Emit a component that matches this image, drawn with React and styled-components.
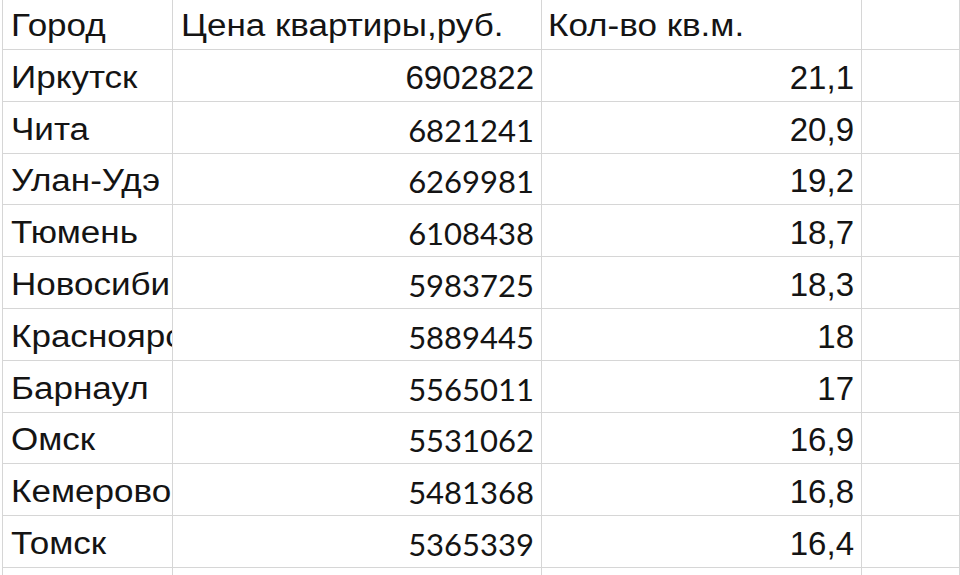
import React from 'react'
import styled, {createGlobalStyle} from 'styled-components'

const GlobalStyle = createGlobalStyle`
  html, body {margin: 0; padding: 0; background: #ffffff;}
  body {width: 960px; height: 575px; overflow: hidden;}
`

// alt = the cells that were typed in a different (calibri-like) font
const rows = [
  ["Иркутск", "6902822", "21,1", false],
  ["Чита", "6821241", "20,9", true],
  ["Улан-Удэ", "6269981", "19,2", true],
  ["Тюмень", "6108438", "18,7", true],
  ["Новосибирск", "5983725", "18,3", true],
  ["Красноярск", "5889445", "18", true],
  ["Барнаул", "5565011", "17", true],
  ["Омск", "5531062", "16,9", true],
  ["Кемерово", "5481368", "16,8", true],
  ["Томск", "5365339", "16,4", true],
  ["", "", "", false],
]

export default function App(){
  return <>
    <GlobalStyle/>
    <Sheet>
      <Row head>
        <Cell pad={8}><Label>Город</Label></Cell>
        <Cell pad={8}><Label>Цена квартиры,руб.</Label></Cell>
        <Cell pad={6}><Label>Кол-во кв.м.</Label></Cell>
        <Cell/>
      </Row>
      {rows.map(([city, price, area, alt], i) =>
        <Row key={i}>
          <Cell pad={8}><Label>{city}</Label></Cell>
          <Cell num><Num alt={alt}>{price}</Num></Cell>
          <Cell num><Num>{area}</Num></Cell>
          <Cell/>
        </Row>
      )}
    </Sheet>
  </>
}

const Sheet = styled.div`
  margin-left: 2px;
  height: 575px;
  overflow: hidden;
  border-left: 1px solid #d6d6d6;
  display: flex;
  flex-direction: column;
  font-family: "Liberation Sans", Arial, sans-serif;
  color: #141414;
`

const Row = styled.div`
  display: grid;
  grid-template-columns: 170px 369px 320px 1fr;
  height: ${props => props.head ? "50px" : "51.8px"};
  flex-shrink: 0;
`

const Cell = styled.div`
  box-sizing: border-box;
  border-right: 1px solid #d6d6d6;
  border-bottom: 1px solid #d6d6d6;
  display: flex;
  align-items: flex-end;
  justify-content: ${props => props.num ? "flex-end" : "flex-start"};
  padding: 0 7px 6px ${props => props.pad || 7}px;
  overflow: hidden;
  white-space: nowrap;
  line-height: 34px;
`

const Label = styled.span`
  display: inline-block;
  font-size: 31px;
  transform: scaleX(1.13);
  transform-origin: left bottom;
`

const Num = styled.span`
  display: inline-block;
  font-size: ${props => props.alt ? "31px" : "33px"};
  font-family: ${props => props.alt ? '"Lato", "Liberation Sans", sans-serif' : 'inherit'};
`
